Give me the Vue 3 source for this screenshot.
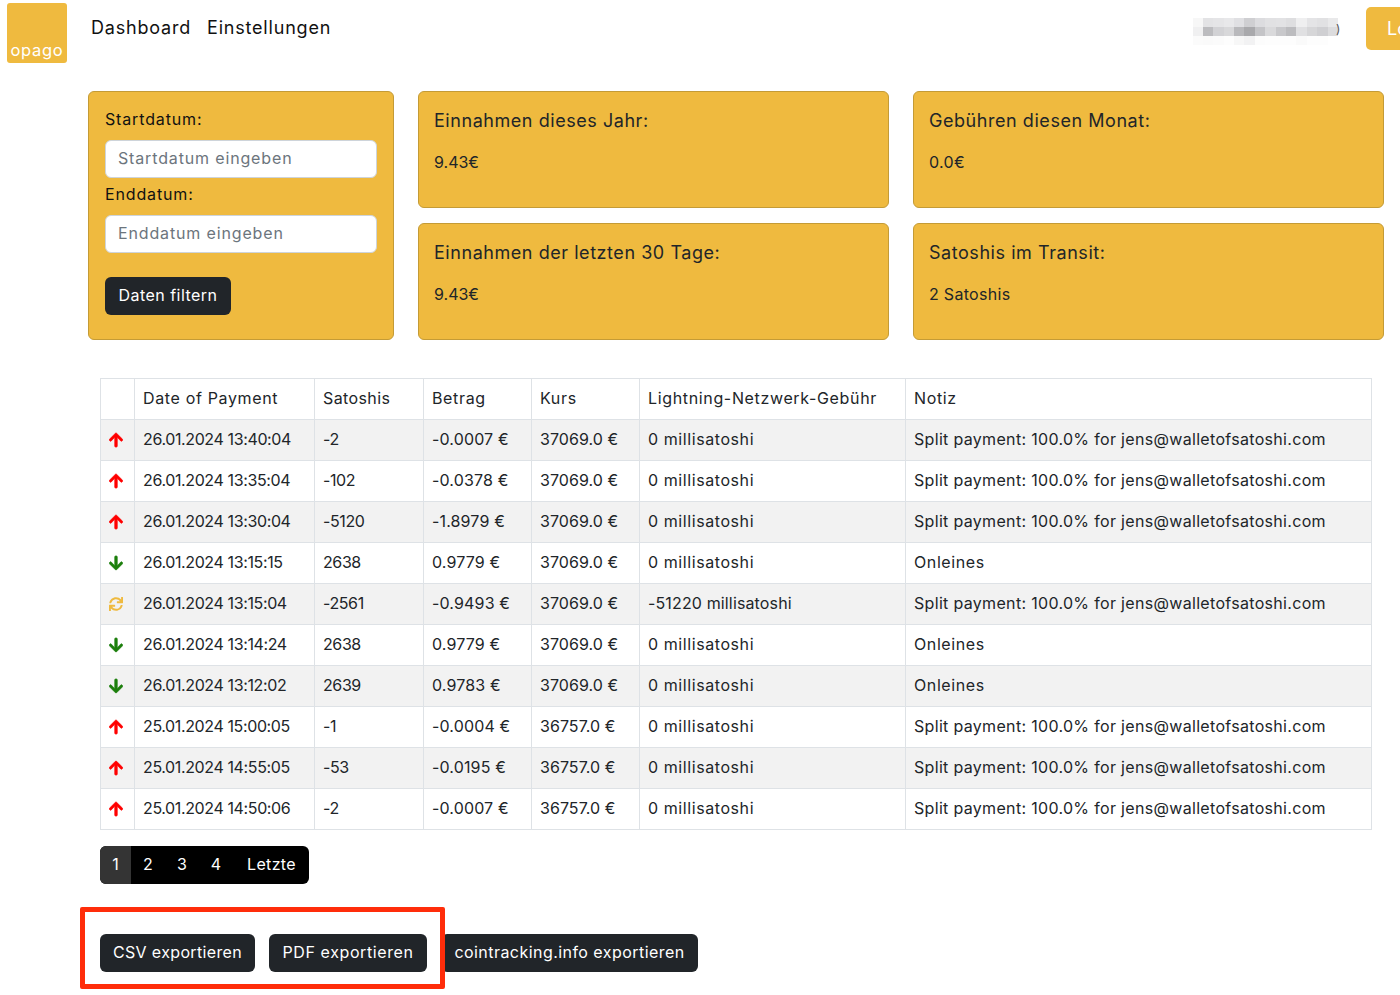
<template>
    <div class="page">
        <nav class="navbar">
            <div class="logo"><span>opago</span></div>
            <a class="nav-link first">Dashboard</a>
            <a class="nav-link">Einstellungen</a>
            <div class="spacer"></div>
            <div class="blurred">
                <i v-for="(c, i) in blurCells" :key="i" :style="{ background: c }"></i>
            </div>
            <span class="blur-tail">)</span>
            <button class="login">Logout</button>
        </nav>

        <section class="cards">
            <div class="card filter">
                <label>Startdatum:</label>
                <input type="text" placeholder="Startdatum eingeben" />
                <label class="second">Enddatum:</label>
                <input type="text" placeholder="Enddatum eingeben" />
                <button class="btn filter-btn">Daten filtern</button>
            </div>
            <div v-for="card in cards" :key="card.title" class="card stat">
                <h5>{{ card.title }}</h5>
                <p :class="card.wide ? 'wide' : ''">{{ card.value }}</p>
            </div>
        </section>

        <div class="table-wrap">
            <table>
                <colgroup>
                    <col v-for="w in colWidths" :key="w.id" :style="{ width: w.px + 'px' }" />
                </colgroup>
                <thead>
                    <tr>
                        <th></th>
                        <th v-for="h in headers" :key="h">{{ h }}</th>
                    </tr>
                </thead>
                <tbody>
                    <tr v-for="row in rows" :key="row.date">
                        <td class="icon-cell">
                            <svg v-if="row.type === 'up'" class="icon up" viewBox="0 0 448 512">
                                <path d="M34.9 289.5l-22.2-22.2c-9.4-9.4-9.4-24.6 0-33.9L207 39c9.4-9.4 24.6-9.4 33.9 0l194.3 194.3c9.4 9.4 9.4 24.6 0 33.9L413 289.4c-9.5 9.5-25 9.3-34.3-.4L264 168.6V456c0 13.3-10.7 24-24 24h-32c-13.3 0-24-10.7-24-24V168.6L69.2 289.1c-9.3 9.8-24.8 10-34.3.4z" />
                            </svg>
                            <svg v-else-if="row.type === 'down'" class="icon down" viewBox="0 0 448 512">
                                <path d="M413.1 222.5l22.2 22.2c9.4 9.4 9.4 24.6 0 33.9L241 473c-9.4 9.4-24.6 9.4-33.9 0L12.7 278.6c-9.4-9.4-9.4-24.6 0-33.9l22.2-22.2c9.5-9.5 25-9.3 34.3.4L184 343.4V56c0-13.3 10.7-24 24-24h32c13.3 0 24 10.7 24 24v287.4l114.8-120.5c9.3-9.8 24.8-10 34.3-.4z" />
                            </svg>
                            <svg v-else class="icon sync" viewBox="0 0 512 512">
                                <path d="M440.65 12.57l4 82.77A247.16 247.16 0 0 0 255.83 8C134.73 8 33.91 94.92 12.29 209.82A12 12 0 0 0 24.09 224h49.05a12 12 0 0 0 11.67-9.26 175.91 175.91 0 0 1 317-56.94l-101.46-4.86a12 12 0 0 0-12.57 12v47.41a12 12 0 0 0 12 12H500a12 12 0 0 0 12-12V12a12 12 0 0 0-12-12h-47.37a12 12 0 0 0-11.98 12.57zM255.83 432a175.61 175.61 0 0 1-146-77.8l101.8 4.87a12 12 0 0 0 12.57-12v-47.4a12 12 0 0 0-12-12H12a12 12 0 0 0-12 12V500a12 12 0 0 0 12 12h47.35a12 12 0 0 0 12-12.6l-4.15-82.57A247.17 247.17 0 0 0 255.83 504c121.11 0 221.93-86.92 243.55-201.82a12 12 0 0 0-11.8-14.18h-49.05a12 12 0 0 0-11.67 9.26A175.86 175.86 0 0 1 255.83 432z" />
                            </svg>
                        </td>
                        <td class="c-date">{{ row.date }}</td>
                        <td class="c-sats">{{ row.sats }}</td>
                        <td class="c-amount">{{ row.amount }}</td>
                        <td class="c-rate">{{ row.rate }}</td>
                        <td :class="row.fee.startsWith('-') ? 'c-fee-neg' : 'c-fee'">{{ row.fee }}</td>
                        <td :class="row.note === split ? 'c-note' : 'c-word'">{{ row.note }}</td>
                    </tr>
                </tbody>
            </table>

            <div class="pagination">
                <a class="active">1</a>
                <a>2</a>
                <a>3</a>
                <a>4</a>
                <a class="last">Letzte</a>
            </div>

            <div class="exports">
                <button class="btn csv">CSV exportieren</button>
                <button class="btn pdf">PDF exportieren</button>
                <button class="btn coin">cointracking.info exportieren</button>
                <div class="highlight"></div>
            </div>
        </div>
    </div>
</template>

<script setup>
const split = 'Split payment: 100.0% for jens@walletofsatoshi.com';

const blurCells = [
    '#f7f7f7', '#e3e3e5', '#e5e5e7', '#e8e8ea', '#e0e0e3', '#cfcfd2', '#dcdcdf', '#e1e1e3', '#e2e2e4', '#dedee0', '#efeff0', '#e4e4e6', '#e1e1e3', '#e9e9ea',
    '#f0f0f1', '#bcbcbf', '#d2d2d5', '#d8d8da', '#b9b9bc', '#a9a9ac', '#c4c4c7', '#d9d9db', '#c8c8cb', '#bcbcbf', '#e0e0e2', '#d6d6d8', '#cfcfd2', '#dcdcde',
    '#fbfbfb', '#fafafa', '#fbfbfb', '#fdfdfd', '#f7f7f7', '#f2f2f3', '#fcfcfc', '#fdfdfd', '#fdfdfd', '#fdfdfd', '#fafafa', '#fdfdfd', '#fdfdfd', '#ffffff',
];

const cards = [
    { title: 'Einnahmen dieses Jahr:', value: '9.43€' },
    { title: 'Gebühren diesen Monat:', value: '0.0€', wide: true },
    { title: 'Einnahmen der letzten 30 Tage:', value: '9.43€' },
    { title: 'Satoshis im Transit:', value: '2 Satoshis', wide: true },
];

const colWidths = [
    { id: 'icon', px: 34 },
    { id: 'date', px: 180 },
    { id: 'sats', px: 109 },
    { id: 'amount', px: 108 },
    { id: 'rate', px: 108 },
    { id: 'fee', px: 266 },
    { id: 'note', px: 466 },
];

const headers = ['Date of Payment', 'Satoshis', 'Betrag', 'Kurs', 'Lightning-Netzwerk-Gebühr', 'Notiz'];

const rows = [
    { type: 'up', date: '26.01.2024 13:40:04', sats: '-2', amount: '-0.0007 €', rate: '37069.0 €', fee: '0 millisatoshi', note: split },
    { type: 'up', date: '26.01.2024 13:35:04', sats: '-102', amount: '-0.0378 €', rate: '37069.0 €', fee: '0 millisatoshi', note: split },
    { type: 'up', date: '26.01.2024 13:30:04', sats: '-5120', amount: '-1.8979 €', rate: '37069.0 €', fee: '0 millisatoshi', note: split },
    { type: 'down', date: '26.01.2024 13:15:15', sats: '2638', amount: '0.9779 €', rate: '37069.0 €', fee: '0 millisatoshi', note: 'Onleines' },
    { type: 'sync', date: '26.01.2024 13:15:04', sats: '-2561', amount: '-0.9493 €', rate: '37069.0 €', fee: '-51220 millisatoshi', note: split },
    { type: 'down', date: '26.01.2024 13:14:24', sats: '2638', amount: '0.9779 €', rate: '37069.0 €', fee: '0 millisatoshi', note: 'Onleines' },
    { type: 'down', date: '26.01.2024 13:12:02', sats: '2639', amount: '0.9783 €', rate: '37069.0 €', fee: '0 millisatoshi', note: 'Onleines' },
    { type: 'up', date: '25.01.2024 15:00:05', sats: '-1', amount: '-0.0004 €', rate: '36757.0 €', fee: '0 millisatoshi', note: split },
    { type: 'up', date: '25.01.2024 14:55:05', sats: '-53', amount: '-0.0195 €', rate: '36757.0 €', fee: '0 millisatoshi', note: split },
    { type: 'up', date: '25.01.2024 14:50:06', sats: '-2', amount: '-0.0007 €', rate: '36757.0 €', fee: '0 millisatoshi', note: split },
];
</script>

<style>
html,
body {
    overflow: hidden;
    background: #fff;
}
</style>

<style scoped>
.page {
    width: 1400px;
    height: 995px;
    overflow: hidden;
    font-family: 'Inter', 'Open Sans', sans-serif;
    font-size: 16px;
    line-height: 24px;
    color: #212529;
}

.navbar {
    display: flex;
    align-items: flex-start;
    height: 91px;
    padding: 3px 0 0 7px;
    box-sizing: border-box;
}

.logo {
    width: 60px;
    height: 60px;
    background: #efba3f;
    border-radius: 3px;
    display: flex;
    align-items: flex-end;
    justify-content: center;
    flex-shrink: 0;
}

.logo span {
    color: #fff;
    font-size: 16.5px;
    line-height: 26px;
    letter-spacing: 0.7px;
}

.nav-link {
    margin-top: 13px;
    margin-left: 16px;
    font-size: 18px;
    letter-spacing: 0.8px;
    color: #111;
}

.nav-link.first {
    margin-left: 24px;
}

.spacer {
    flex: 1;
}

.blurred {
    display: grid;
    grid-template-columns: repeat(14, 10.4px);
    grid-auto-rows: 9px;
    margin-top: 15px;
    margin-right: 1px;
}

.blur-tail {
    margin-top: 14px;
    margin-left: -3px;
    font-size: 12px;
    width: 30px;
    color: #555;
}

.login {
    margin-top: 4px;
    width: 70px;
    height: 43px;
    margin-right: -36px;
    background: #efba3f;
    color: #fff;
    border: none;
    border-radius: 5px;
    font: inherit;
    font-size: 18px;
    text-align: left;
    padding-left: 21px;
    flex-shrink: 0;
    white-space: nowrap;
    overflow: hidden;
}

.cards {
    display: grid;
    grid-template-columns: 306px 471px 471px;
    grid-template-rows: 117px 117px;
    column-gap: 24px;
    row-gap: 15px;
    margin-left: 88px;
}

.card {
    background: #efba3f;
    border: 1px solid #c49b36;
    border-radius: 6px;
    box-sizing: border-box;
}

.filter {
    grid-row: 1 / span 2;
    padding: 15px 16px 0;
    display: flex;
    flex-direction: column;
    align-items: flex-start;
    color: #111;
}

.filter label {
    height: 24px;
    margin-bottom: 9px;
    letter-spacing: 0.85px;
}

.filter label.second {
    margin-top: 4px;
    margin-bottom: 9px;
}

.filter input {
    width: 272px;
    height: 38px;
    padding: 0 12px 2px;
    box-sizing: border-box;
    border: 1px solid #ced4da;
    border-radius: 6px;
    font: inherit;
    letter-spacing: 0.85px;
    color: #212529;
    background: #fff;
    outline: none;
}

.filter input::placeholder {
    color: #6c757d;
    opacity: 1;
}

.btn {
    height: 38px;
    padding: 0 13px 2px;
    background: #212529;
    color: #fff;
    border: none;
    border-radius: 6px;
    font: inherit;
    letter-spacing: 0.45px;
    white-space: nowrap;
}

.filter-btn {
    margin-top: 24px;
    width: 126px;
    padding: 0 0 2px;
}

.stat {
    padding: 16px 16px 16px 15px;
}

.stat h5 {
    margin: 0 0 16px;
    font-size: 18px;
    font-weight: 400;
    line-height: 26px;
    letter-spacing: 0.55px;
}

.stat p {
    margin: 0;
}

.stat p.wide {
    letter-spacing: 0.3px;
}

.table-wrap {
    padding: 38px 28px 0 100px;
}

table {
    width: 1271px;
    table-layout: fixed;
    border-collapse: collapse;
    border: 1px solid #dee2e6;
}

th,
td {
    height: 41px;
    box-sizing: border-box;
    padding: 0 8px 2px;
    border: 1px solid #dee2e6;
    font-weight: 400;
    text-align: left;
    white-space: nowrap;
    overflow: hidden;
}

th {
    letter-spacing: 0.65px;
}

th:nth-child(3) {
    letter-spacing: 0.4px;
}

tbody tr:nth-child(odd) td {
    background: #f2f2f2;
}

.c-date {
    letter-spacing: -0.38px;
}

.c-sats {
    letter-spacing: -0.4px;
}

.c-amount {
    letter-spacing: 0.15px;
}

.c-rate {
    letter-spacing: 0.05px;
}

.c-fee {
    letter-spacing: 0.58px;
}

.c-fee-neg {
    letter-spacing: 0.14px;
}

.c-note {
    letter-spacing: 0.32px;
}

.c-word {
    letter-spacing: 0.6px;
}

.icon-cell {
    padding: 0 0 0 8px;
}

.icon {
    display: block;
    height: 16px;
    width: 14px;
}

.up {
    fill: #f00;
    stroke: #f00;
    stroke-width: 22;
}

.down {
    fill: #1c7f0c;
    stroke: #1c7f0c;
    stroke-width: 22;
}

.sync {
    fill: #efba3f;
}

.pagination {
    display: inline-flex;
    margin-top: 16px;
    height: 38px;
    background: #000;
    border-radius: 6px;
    overflow: hidden;
    color: #fff;
    vertical-align: top;
}

.pagination a {
    line-height: 36px;
    width: 34px;
    text-align: center;
}

.pagination a.active {
    width: 31px;
    background: #343434;
}

.pagination a.last {
    width: 76px;
    box-sizing: border-box;
    text-align: left;
    padding-left: 14px;
    letter-spacing: 0.35px;
}

.exports {
    position: relative;
    display: flex;
    margin-top: 50px;
    gap: 14px;
}

.csv {
    width: 155px;
    padding: 0 0 2px;
    letter-spacing: 0.35px;
}

.pdf {
    width: 158px;
    padding: 0 0 2px;
    letter-spacing: 0.6px;
}

.coin {
    width: 257px;
    padding: 0 0 2px;
}

.highlight {
    position: absolute;
    left: -20px;
    top: -27px;
    width: 365px;
    height: 82px;
    box-sizing: border-box;
    border: 5px solid #ff2d0a;
    border-radius: 2px;
    pointer-events: none;
}
</style>
